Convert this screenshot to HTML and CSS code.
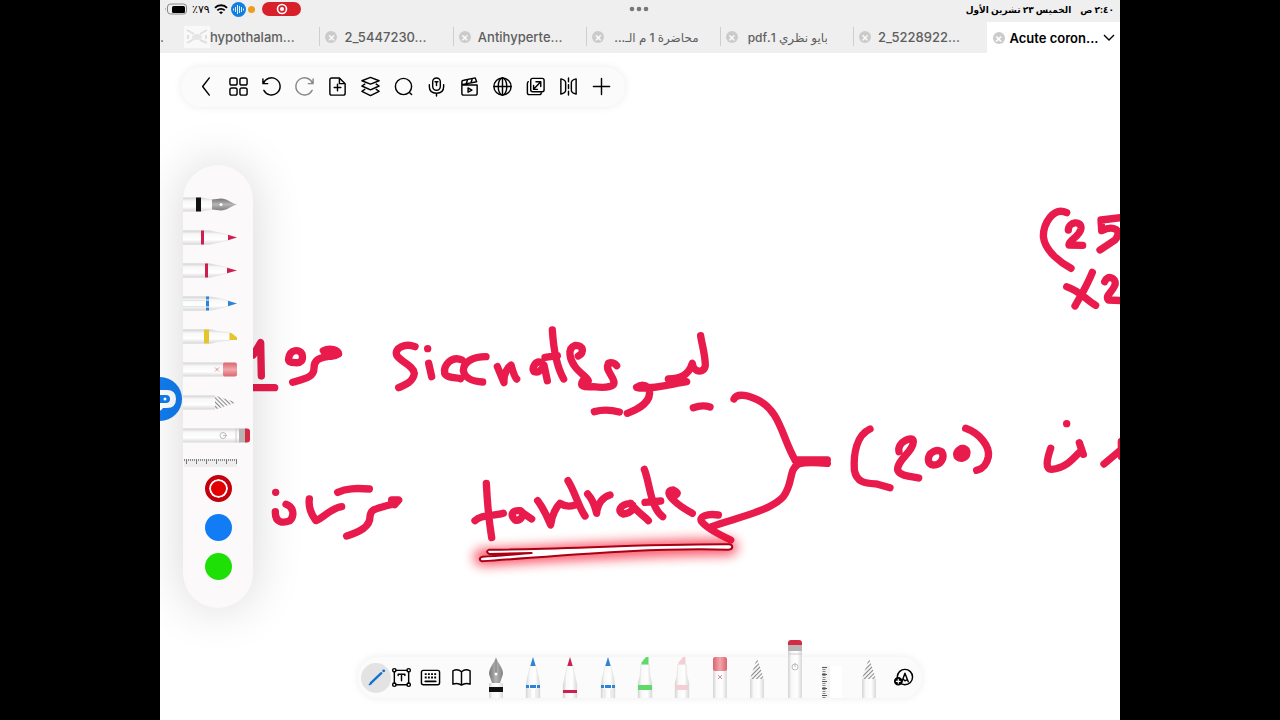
FILE: index.html
```html
<!DOCTYPE html>
<html lang="ar">
<head>
<meta charset="utf-8">
<title>Acute coronary</title>
<link rel="stylesheet" href="styles.css">
</head>
<body>
<svg class="defs" aria-hidden="true">
  <defs>
    <linearGradient id="barrel"><stop offset="0" stop-color="#d2d2d2"/><stop offset=".25" stop-color="#f8f8f8"/><stop offset=".65" stop-color="#fff"/><stop offset="1" stop-color="#d8d8d8"/></linearGradient>
    <linearGradient id="steel"><stop offset="0" stop-color="#777"/><stop offset=".5" stop-color="#b5b5b5"/><stop offset="1" stop-color="#808080"/></linearGradient>
    <linearGradient id="rubber"><stop offset="0" stop-color="#d9666f"/><stop offset=".5" stop-color="#f3a5aa"/><stop offset="1" stop-color="#d9666f"/></linearGradient>
    <pattern id="hatch" width="3" height="3" patternUnits="userSpaceOnUse" patternTransform="rotate(45)"><rect width="3" height="3" fill="#f6f6f6"/><rect width="1" height="3" fill="#888"/></pattern>
  </defs>
  <symbol id="fountain" viewBox="0 0 18 58"><path d="M2 26h14v32H2z" fill="url(#barrel)"/><path d="M2 30h14v5H2z" fill="#111"/><path d="M9 0C11 7 16 10 16 17l-3 9H5l-3-9C2 10 7 7 9 0z" fill="url(#steel)"/><path d="M9 2v14" stroke="#666" stroke-width=".7"/><circle cx="9" cy="17" r="1.500" fill="#fff"/></symbol>
  <symbol id="fountain-long" viewBox="0 0 18 58"><path d="M4 24h10l2 12v22H2V36z" fill="url(#barrel)"/><path d="M2 36h14v5H2z" fill="#111"/><path d="M9 0C11 7 15 10 15 16l-1 9H4l-1-9C3 10 7 7 9 0z" fill="url(#steel)"/><circle cx="9" cy="16" r="1.500" fill="#fff"/></symbol>
  <symbol id="fineliner" viewBox="0 0 18 58"><path d="M6.500 8h5l4.500 20v30H2V28z" fill="url(#barrel)" stroke="#ddd" stroke-width=".5"/><path d="M9 0l2.700 9H6.300z" fill="currentColor"/><path d="M2 33h14v3H2z" fill="currentColor"/></symbol>
  <symbol id="brush-pen" viewBox="0 0 18 58"><path d="M6.500 8h5l4.500 20v30H2V28z" fill="url(#barrel)" stroke="#ddd" stroke-width=".5"/><path d="M9 0l2.700 10H6.300z" fill="currentColor"/><path d="M2 29h14v3H2z" fill="currentColor"/></symbol>
  <symbol id="brush" viewBox="0 0 18 58"><path d="M6.500 8h5l3.500 14 1 8v28H2V30l1-8z" fill="url(#barrel)" stroke="#ddd" stroke-width=".5"/><path d="M6 32v26M12 32v26" stroke="#dfe5ea"/><path d="M9 0l2.700 9H6.300z" fill="currentColor"/><path d="M2 28h14v3H2z" fill="currentColor"/><path d="M5 28h1v3H5zM12 28h1v3h-1z" fill="#fff"/></symbol>
  <symbol id="marker" viewBox="0 0 18 58"><path d="M5 7h8l1 12 2 7v32H2V26l2-7z" fill="url(#barrel)" stroke="#ddd" stroke-width=".5"/><path d="M5.500 7.500V5.500L10 0h2.500v7.500z" fill="currentColor"/><path d="M2 28h14v5H2z" fill="currentColor"/></symbol>
  <symbol id="eraser" viewBox="0 0 18 58"><path d="M2 12h14v46H2z" fill="url(#barrel)"/><rect x="2" width="14" height="14" rx="2" fill="url(#rubber)"/><path d="M7 18l4 4m0-4l-4 4" stroke="#c77" stroke-width=".8"/></symbol>
  <symbol id="tape" viewBox="0 0 18 58"><path d="M2 22h14v36H2z" fill="url(#barrel)"/><path d="M9 1l7 21H2z" fill="url(#hatch)"/></symbol>
  <symbol id="laser" viewBox="0 0 18 70"><path d="M2 10h14v60H2z" fill="url(#barrel)"/><path d="M2 4h14v7H2z" fill="#b9b4b4"/><path d="M2 5V3Q2 0 5 0h8q3 0 3 3v2z" fill="#d42b45"/><path d="M2 14h14" stroke="#ccc"/><circle cx="9" cy="27" r="3" fill="none" stroke="#bbb"/><path d="M9 23v4" stroke="#bbb"/></symbol>
</svg>

<main class="tablet">
  <header class="status">
    <div class="status-left">
      <svg width="24" height="14" viewBox="0 0 24 14"><path d="M2 5.500Q.7 7 2 8.500z" fill="#777"/><rect x="3.500" y="2" width="19" height="10" rx="3" fill="none" stroke="#888"/><rect x="8" y="4" width="13" height="7" rx="1.500"/></svg>
      <span class="percent">٪٧٩</span>
      <svg width="14" height="12" viewBox="0 0 14 12" fill="none" stroke="#000" stroke-width="1.800"><path d="M1 4.800C4 1.400 10 1.400 13 4.800M3.300 7.300c2-2 5.400-2 7.400 0"/><path d="M5 9.200q2-1.500 4 0l-2 2z" fill="#000" stroke="none"/></svg>
      <svg class="voice" width="15" height="15" viewBox="0 0 15 15"><circle cx="7.500" cy="7.500" r="7.500" fill="#127fe0"/><path d="M2.500 6.500v2M4.500 5v5M6.500 3v9M8.500 4v7M10.500 5v5M12.500 6.500v2" stroke="#d8efff"/></svg>
      <i class="mic-dot"></i>
      <span class="record"><svg width="12" height="12" viewBox="0 0 12 12"><circle cx="6" cy="6" r="4.500" fill="none" stroke="#fff" stroke-width="1.600"/><circle cx="6" cy="6" r="2" fill="#fff"/></svg></span>
    </div>
    <svg width="20" height="6" viewBox="0 0 20 6" fill="#777"><circle cx="3" cy="3" r="2.300"/><circle cx="10" cy="3" r="2.300"/><circle cx="17" cy="3" r="2.300"/></svg>
    <div class="status-right" dir="rtl"><span>٢:٤٠ ص</span><span>الخميس ٢٣ تشرين الأول</span></div>
  </header>

  <nav class="tabs">
    <div class="stub">.</div>
    <div class="tab first"><svg class="thumb" width="26" height="22" viewBox="0 0 26 22"><path d="M0 0h26v22H0z" fill="#f9f9f9"/><path d="M3 4l7 4m6 0l7-4M3 17l7-4m6 1l7 3M4 9v4m18-4v4" stroke="#e0e0e0" stroke-width="2"/><ellipse cx="13" cy="11" rx="5" ry="3" fill="#e5e5e5"/></svg><button class="title">hypothalam...</button></div>
    <div class="tab"><button class="close" aria-label="Close">×</button><button class="title">2_5447230...</button></div>
    <div class="tab"><button class="close" aria-label="Close">×</button><button class="title">Antihyperte...</button></div>
    <div class="tab"><button class="close" aria-label="Close">×</button><button class="title arabic" dir="rtl">محاضرة 1 م الـ...</button></div>
    <div class="tab"><button class="close" aria-label="Close">×</button><button class="title arabic" dir="rtl">بايو نظري 1.pdf</button></div>
    <div class="tab"><button class="close" aria-label="Close">×</button><button class="title">2_5228922...</button></div>
    <div class="tab active"><button class="close" aria-label="Close">×</button><button class="title">Acute coron...</button><svg width="14" height="8" viewBox="0 0 14 8" fill="none" stroke="#000" stroke-width="1.400"><path d="M2 1l5 5 5-5"/></svg></div>
  </nav>

  <section class="canvas">
    <svg class="ink" viewBox="160 53 960 667" preserveAspectRatio="xMinYMin slice" role="img" aria-label="Handwritten notes">
      <defs><filter id="glow" x="-20%" y="-200%" width="140%" height="500%"><feGaussianBlur stdDeviation="18"/></filter></defs>
      <g transform="translate(240 310) scale(.33333)">
        <path d="M40 135L62 98 64 198M40 233H104"/>
        <path d="M146 145C150 118 178 116 186 132 192 152 180 160 165 158 150 158 144 154 146 145z"/>
        <path d="M158 217C200 205 222 200 222 175 222 150 235 145 262 140M250 122C270 112 295 120 296 132 280 142 265 142 255 130H285"/>
        <path d="M525 110C495 98 462 115 470 135 480 155 520 165 523 190 520 215 495 225 476 233M563 116h.1M566 160L575 200"/>
        <path d="M666 150C636 136 610 165 614 190 620 205 650 202 662 206M738 140C700 140 670 155 670 182 674 205 700 215 728 216"/>
        <path d="M107 547h.1M106 605C105 640 130 640 150 632 165 615 160 590 138 583"/>
        <path d="M208 567C205 590 215 615 228 632 250 625 270 595 305 590M293 547C320 535 345 534 388 537"/>
        <path d="M320 678C360 665 390 650 390 620 392 600 400 598 430 590 450 585 460 580 464 584L476 570 455 570"/>
      </g>
      <g transform="translate(460 310) scale(.33333)">
        <path d="M112 170L132 218C130 190 145 170 153 165 158 180 162 200 170 207"/>
        <path d="M245 158C225 150 215 175 222 185 235 190 245 180 252 165L262 212M277 60C280 110 290 170 311 207M255 142L292 137"/>
        <path d="M355 138C375 128 370 105 345 106 320 115 330 150 345 170 360 190 385 205 385 212L370 210C355 230 375 232 400 230 440 235 465 230 462 215 455 190 435 180 445 160 455 155 465 160 470 167M403 305C430 298 455 300 478 306"/>
        <path d="M502 310C540 295 575 275 568 240 560 220 540 225 530 232 560 240 620 225 680 215L625 207C655 205 685 200 697 160 700 190 735 190 736 165 735 130 725 100 722 77M700 293C720 286 735 286 750 291"/>
        <path d="M79 520C82 580 88 640 95 683M45 632C65 612 95 620 130 610"/>
        <path d="M180 602C155 600 150 615 165 630 180 635 195 615 185 605M190 610L215 627M233 572C250 595 262 620 272 645 275 615 290 590 300 580 315 590 330 590 345 585M324 512C345 545 355 590 375 618"/>
        <path d="M383 552C400 570 405 590 410 610 412 580 430 560 450 555M512 580C480 582 470 605 490 612 515 610 530 590 512 580 530 605 555 620 565 632"/>
        <path d="M553 478C570 520 570 590 608 620M555 577L602 573M640 560C660 550 650 545 640 540 620 540 625 555 640 570 660 590 680 600 697 610"/>
      </g>
      <g transform="translate(700 380) scale(.33333)">
        <path d="M102 57C110 40 140 45 170 58 240 90 245 170 285 240M382 240H285M55 405C20 400 -5 410 5 425 20 445 60 465 92 480M35 440C100 415 210 395 250 350 280 310 265 270 295 252 320 245 360 248 382 250"/>
        <path d="M510 147C470 165 460 220 463 270 470 310 500 310 530 312L570 323M597 215C590 185 640 165 640 185 640 215 590 240 593 270 600 290 640 290 656 294"/>
        <path d="M700 215C680 225 680 255 700 255 725 255 735 230 725 215 715 210 705 212 700 215zM785 205C765 215 765 235 785 235 805 230 805 210 790 205zM785 220h8M797 145C840 160 870 200 865 230 860 255 850 265 830 271"/>
        <path d="M1100 131h.1M1052 205C1040 240 1035 268 1055 268 1100 265 1125 230 1145 210L1138 188 1150 223"/>
      </g>
      <g transform="translate(1000 190) scale(.33333)">
        <path d="M200 68C160 50 130 100 130 140 135 185 185 220 213 235M205 120C205 95 245 90 243 115 240 140 205 150 207 165L248 166M370 82L303 90 305 122C340 105 370 120 345 150L300 180"/>
        <path d="M200 290C235 300 260 330 287 346M277 247C260 290 240 320 225 348M314 275C320 255 350 260 345 285 335 310 315 315 325 330L370 332M312 822L362 780M364 754V800"/>
      </g>
      <g class="beam" transform="translate(460 310) scale(.33333)">
        <path class="halo" filter="url(#glow)" d="M66 742C300 730 560 712 808 711"/>
        <path class="core" d="M88 719C300 718 560 702 808 703 820 705 820 718 805 719 560 712 300 738 66 754 56 750 58 742 68 740 120 738 170 732 215 729L88 732C78 728 80 722 88 719z"/>
      </g>
    </svg>

    <button class="chat" aria-label="Assistant"><svg width="44" height="44" viewBox="0 0 44 44"><circle cx="22" cy="22" r="22" fill="#127cf0"/><path d="M14 13h15q9 0 9 9t-9 9h-4q-3 4-6 3v-3h-5q-8 0-8-9t8-9z" fill="#fff"/><rect x="11" y="18" width="21" height="8" rx="4" fill="#127cf0"/><circle cx="27" cy="22" r="1.500" fill="#fff"/></svg></button>

    <div class="toolbar">
      <button aria-label="Back"><svg viewBox="0 0 22 22"><path d="M15 2l-7 9 7 9"/></svg></button>
      <button aria-label="Pages"><svg viewBox="0 0 22 22"><rect x="2" y="2" width="7.500" height="7.500" rx="2"/><rect x="12.500" y="2" width="7.500" height="7.500" rx="2"/><rect x="2" y="12.500" width="7.500" height="7.500" rx="2"/><rect x="12.500" y="12.500" width="7.500" height="7.500" rx="2"/></svg></button>
      <button aria-label="Undo"><svg viewBox="0 0 22 22"><path d="M2 3v5h5M2.500 8A9 9 0 1 1 3 15"/></svg></button>
      <button class="muted" aria-label="Redo"><svg viewBox="0 0 22 22"><path d="M20 3v5h-5M19.500 8A9 9 0 1 0 19 15"/></svg></button>
      <button aria-label="Add page"><svg viewBox="0 0 22 22"><path d="M5 2h8l6 6v10q0 2-2 2H5q-2 0-2-2V4q0-2 2-2zM13 2v6h6M11 8.500v7M7.500 12h7"/></svg></button>
      <button aria-label="Layers"><svg viewBox="0 0 22 22"><path d="M11 1.500L20 5l-9 3.500L2 5zM5 8.500L2 10.500l9 4 9-4-3-2M5 14L2 16l9 4.500L20 16l-3-2"/></svg></button>
      <button aria-label="Search"><svg viewBox="0 0 22 22"><circle cx="11" cy="11" r="8.500"/><path d="M17.500 17.500l2 2"/></svg></button>
      <button aria-label="Record"><svg viewBox="0 0 22 22"><rect x="7" y="2" width="8" height="13" rx="4"/><path d="M3.500 9v2q0 7 7.500 7t7.500-7V9M11 18v3M9.500 6h3M11 6v4"/></svg></button>
      <button aria-label="Video"><svg viewBox="0 0 22 22"><path d="M3 9.500h16V18q0 2-2 2H5q-2 0-2-2zM3 9.500V6.500q0-2 2-2L17 2l1.500 4L3 9M9 4L7.500 8M14 3l-1.500 4M9.500 12.500v4.500l4-2.300z"/></svg></button>
      <button aria-label="Web"><svg viewBox="0 0 22 22"><circle cx="11" cy="11" r="9"/><ellipse cx="11" cy="11" rx="4.500" ry="9"/><path d="M2 11h18M11 2v18"/></svg></button>
      <button aria-label="Windows"><svg viewBox="0 0 22 22"><rect x="6" y="2.500" width="14" height="14" rx="2"/><path d="M3.500 6Q2.500 6 2.500 8v9.500q0 2 2 2H15q2 0 2-2M9 14L16.500 6M11.500 6h5v5M9 10v4h4"/></svg></button>
      <button aria-label="Mirror"><svg viewBox="0 0 22 22"><path d="M3 3q5 1 5 4v8q0 3-5 4zM19 3q-5 1-5 4v8q0 3 5 4zM11 2v4M11 9v4M11 16v4"/></svg></button>
      <button aria-label="Add"><svg viewBox="0 0 22 22"><path d="M11 2.500v17M2.500 11h17"/></svg></button>
    </div>

    <div class="palette">
      <button aria-label="Fountain pen"><svg viewBox="0 0 70 33"><use href="#fountain-long" width="18" height="58" transform="translate(54 7.500) rotate(90)"/></svg></button>
      <button class="crimson" aria-label="Pen"><svg viewBox="0 0 70 33"><use href="#fineliner" width="18" height="58" transform="translate(54 7.500) rotate(90)"/></svg></button>
      <button class="crimson" aria-label="Brush"><svg viewBox="0 0 70 33"><use href="#brush-pen" width="18" height="58" transform="translate(54 7.500) rotate(90)"/></svg></button>
      <button class="blue" aria-label="Pencil"><svg viewBox="0 0 70 33"><use href="#brush" width="18" height="58" transform="translate(54 7.500) rotate(90)"/></svg></button>
      <button class="yellow" aria-label="Highlighter"><svg viewBox="0 0 70 33"><use href="#marker" width="18" height="58" transform="translate(54 7.500) rotate(90)"/></svg></button>
      <button aria-label="Eraser"><svg viewBox="0 0 70 33"><use href="#eraser" width="18" height="58" transform="translate(54 7.500) rotate(90)"/></svg></button>
      <button aria-label="Tape"><svg viewBox="0 0 70 33"><use href="#tape" width="18" height="58" transform="translate(54 7.500) rotate(90)"/></svg></button>
      <button aria-label="Laser"><svg viewBox="0 0 70 33"><use href="#laser" width="18" height="70" transform="translate(67 7.500) rotate(90)"/></svg></button>
      <button class="rule" aria-label="Ruler"><svg viewBox="0 0 70 23"><path d="M1 7h53v8H1z" fill="#eee"/><path d="M1 8h53" stroke="#888" stroke-width="2" stroke-dasharray="1 1"/><path d="M3.500 7v5M13.500 7v5M23.500 7v5M33.500 7v5M43.500 7v5M53.500 7v5" stroke="#777"/></svg></button>
      <div class="colors">
        <input class="red" type="radio" name="color" aria-label="Red" checked>
        <input class="azure" type="radio" name="color" aria-label="Blue">
        <input class="green" type="radio" name="color" aria-label="Green">
      </div>
    </div>

    <div class="dock">
      <button class="mode selected" aria-label="Draw"><svg viewBox="0 0 22 22"><path d="M5 17L16 6.500" stroke="#1573cf" stroke-width="2.500"/><path d="M18.500 4h.1" stroke="#1573cf" stroke-width="3"/><path d="M3.500 18.500l2-1" stroke="#1573cf"/></svg></button>
      <button class="mode" aria-label="Text"><svg viewBox="0 0 22 22"><path d="M5 3.500h12M5 18.500h12M3.500 5v12M18.500 5v12M7.500 9V7.500h7V9M11 7.500v7"/><circle cx="3.500" cy="3.500" r="1.800"/><circle cx="18.500" cy="3.500" r="1.800"/><circle cx="3.500" cy="18.500" r="1.800"/><circle cx="18.500" cy="18.500" r="1.800"/></svg></button>
      <button class="mode" aria-label="Keyboard"><svg viewBox="0 0 22 22"><rect x="1.500" y="3.500" width="19" height="15" rx="2"/><path d="M5 7.500h12M5 11h12" stroke-width="2" stroke-dasharray="2 1.300" stroke-linecap="butt"/><path d="M5.500 15h11" stroke-width="1.800"/></svg></button>
      <button class="mode" aria-label="Read"><svg viewBox="0 0 22 22"><path d="M11 5Q7 1.500 2 4v14q5-2 9 1 4-3 9-1V4q-5-2.500-9 1zM11 5v14"/></svg></button>
      <div class="pens">
        <button aria-label="Fountain pen"><svg viewBox="0 0 18 41"><use href="#fountain" width="18" height="58"/></svg></button>
        <button class="blue" aria-label="Brush"><svg viewBox="0 0 18 41"><use href="#brush" width="18" height="58"/></svg></button>
        <button class="crimson" aria-label="Pen"><svg viewBox="0 0 18 41"><use href="#fineliner" width="18" height="58"/></svg></button>
        <button class="blue" aria-label="Pencil"><svg viewBox="0 0 18 41"><use href="#brush" width="18" height="58"/></svg></button>
        <button class="lime" aria-label="Highlighter"><svg viewBox="0 0 18 41"><use href="#marker" width="18" height="58"/></svg></button>
        <button class="pink" aria-label="Marker"><svg viewBox="0 0 18 41"><use href="#marker" width="18" height="58"/></svg></button>
        <button aria-label="Eraser"><svg viewBox="0 0 18 41"><use href="#eraser" width="18" height="58"/></svg></button>
        <button aria-label="Tape"><svg viewBox="0 0 18 41"><use href="#tape" width="18" height="58"/></svg></button>
        <button aria-label="Laser"><svg class="raised" viewBox="0 0 18 58"><use href="#laser" width="18" height="70"/></svg></button>
        <button aria-label="Ruler"><svg class="wide" viewBox="0 0 22 41"><path d="M1 9h20v32H1z" fill="#f2f2f2"/><path d="M9 9h12v32H9z" fill="#fff"/><path d="M3 10v31" stroke="#888" stroke-width="3" stroke-dasharray="1 1"/><path d="M1 10.500h5M1 17.500h5M1 24.500h5M1 31.500h5M1 38.500h5" stroke="#555"/></svg></button>
        <button aria-label="Pattern"><svg viewBox="0 0 18 41"><use href="#tape" width="18" height="58"/></svg></button>
      </div>
      <button class="mode" aria-label="Add pen"><svg viewBox="0 0 22 22"><circle cx="12.500" cy="10.500" r="8"/><path d="M9 16.500l3.500-10L16 15.500M10.500 12.500l2 2 2-1"/><circle cx="5.500" cy="15" r="3.700" fill="#000"/><path d="M3.500 15h4M5.500 13v4" stroke="#fff" stroke-width="1.200"/></svg></button>
    </div>
  </section>
</main>
</body>
</html>
```
FILE: styles.css
```css
* { box-sizing: border-box; }
body { margin: 0; background: #000; font-family: Inter, "DejaVu Sans", sans-serif; }
button { border: 0; padding: 0; background: none; font: inherit; color: inherit; display: flex; align-items: center; justify-content: center; }
svg { display: block; flex: none; }
.defs { position: absolute; width: 0; height: 0; }

.tablet { width: 75%; min-height: 100vh; margin: 0 auto; display: flex; flex-direction: column; background: #fff; overflow: hidden; }

.status { height: 22px; display: grid; grid-template-columns: 1fr auto 1fr; align-items: center; padding: 0 6px 4px 4px; background: #efefef; }
.status-left { display: flex; align-items: center; }
.percent { width: 26px; padding-left: 4px; font-size: 11px; font-weight: 500; white-space: nowrap; }
.voice { margin-left: 3px; }
.mic-dot { width: 7px; height: 7px; margin: 0 7px 0 2px; border-radius: 50%; background: #f09d1c; }
.record { width: 39px; height: 14px; display: flex; align-items: center; justify-content: center; border-radius: 7px; background: #d8202a; }
.status-right { display: flex; gap: 9px; font-size: 9px; font-weight: 700; white-space: nowrap; }

.tabs { height: 31px; display: flex; padding-bottom: 1px; background: #efefef; color: #5e5e5e; font-size: 13px; font-weight: 500; }
.stub { flex: 0 0 26px; line-height: 30px; }
.tab { position: relative; flex: 1 1 0; min-width: 0; display: flex; align-items: center; padding-left: 6px; }
.tab + .tab:not(.active)::before { content: ""; position: absolute; left: 0; top: 5px; bottom: 6px; width: 1px; background: #cfcfcf; }
.close { flex: none; width: 12px; height: 12px; border-radius: 50%; background: #cbcbcb; color: #fff; font-size: 12px; line-height: 12px; }
.title { margin-left: 7px; white-space: nowrap; }
.first .title { margin-left: 0; }
.thumb { margin-left: -8px; }
.arabic { margin-left: 10px; font-size: 12px; }
.active { margin-bottom: -1px; background: #fff; color: #000; font-weight: 600; }
.active .title { margin-left: 5px; }
.active > svg { margin-left: auto; margin-right: 4px; }

.canvas { position: relative; flex: 1; display: flex; flex-direction: column; align-items: flex-start; padding: 14px 21px 22px; }
.ink { position: absolute; inset: 0; width: 100%; height: 100%; fill: none; stroke: #e91b4c; stroke-width: 22; stroke-linecap: round; stroke-linejoin: round; }
.halo { stroke: #f5001e; stroke-width: 50; opacity: .65; }
.core { fill: #fff; stroke: #a90015; stroke-width: 6; }
.chat { position: absolute; left: -22px; top: 324px; }

.toolbar, .dock, .palette { position: relative; background: #fbfbfb; box-shadow: 0 0 8px rgba(0, 0, 0, .08); }
.toolbar { display: flex; height: 40px; padding: 0 7px 1px 8px; border-radius: 20px; }
.toolbar button { width: 33px; }
.toolbar svg, .mode svg { width: 21px; height: 21px; fill: none; stroke: #000; stroke-width: 1.5; stroke-linecap: round; stroke-linejoin: round; }
.toolbar .muted svg { stroke: #888; }

.palette { width: 70px; margin: 58px 0 0 2px; padding: 23px 0 28px; border-radius: 35px; background: #fbf9fa; box-shadow: 0 0 50px rgba(0, 0, 0, .16); }
.palette button, .palette button svg { width: 70px; height: 33px; }
.palette .rule, .palette .rule svg { height: 23px; }
.colors { display: flex; flex-direction: column; align-items: center; gap: 12px; }
.colors input { appearance: none; width: 27px; height: 27px; margin: 0; border-radius: 50%; }
.red { background: #e20000; border: 4px solid #c5000c; box-shadow: inset 0 0 0 2px #fff; }
.azure { background: #127cf5; }
.green { background: #1fe006; }

.crimson { color: #ce2050; }
.blue { color: #2d83d5; }
.yellow { color: #e5c52c; }
.lime { color: #5dda69; }
.pink { color: #f3cfd5; }

.dock { display: flex; align-items: center; align-self: center; height: 41px; margin-top: auto; padding: 0 3px; border-radius: 20px; }
.mode { width: 31px; height: 30px; border-radius: 50%; }
.mode.selected { width: 30px; background: #e3e3e4; }
.selected + .mode { width: 20px; margin-right: 4px; }
.pens { display: flex; align-items: flex-end; width: 411px; height: 41px; }
.pens button { flex: 1; min-width: 0; height: 41px; align-items: flex-end; }
.pens svg { width: 18px; height: 41px; }
.pens .raised { height: 58px; }
.pens .wide { width: 22px; }
```
